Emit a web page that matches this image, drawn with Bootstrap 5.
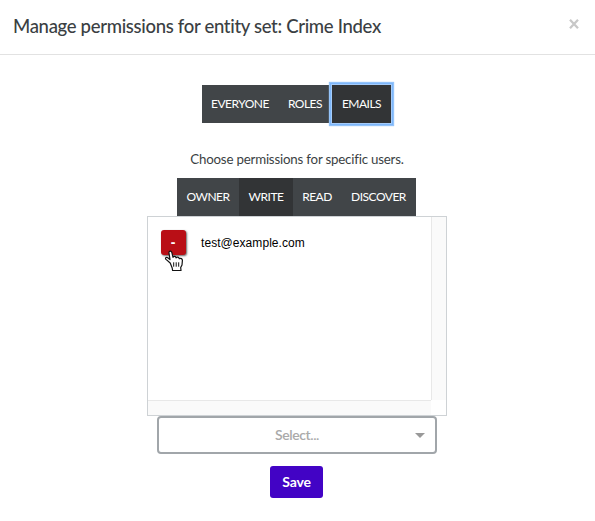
<!DOCTYPE html>
<html lang="en">
<head>
<meta charset="utf-8">
<meta name="viewport" content="width=device-width, initial-scale=1">
<title>Manage permissions</title>
<link href="https://cdn.jsdelivr.net/npm/bootstrap@5.3.0/dist/css/bootstrap.min.css" rel="stylesheet">
<style>
body{font-family:Lato,sans-serif;font-size:13.5px;color:#3b3f43;background:#fff;height:521px;overflow:hidden}
.dialog-head{height:55px;border-bottom:1px solid #e2e2e2;padding:0 15px 0 13px}
.dialog-title{font-size:18.5px;font-weight:500;letter-spacing:-.31px;line-height:24px;white-space:nowrap;margin-top:14px}
.close-x{color:#c8c8c8;line-height:0;margin-top:19px}
.dialog-body{width:594px}
.tabs{margin-right:1px}
.tabs .btn{--bs-btn-color:#fff;--bs-btn-bg:#414548;--bs-btn-border-width:0;--bs-btn-border-radius:0;--bs-btn-active-bg:#323436;--bs-btn-active-color:#fff;--bs-btn-hover-bg:#373a3c;--bs-btn-hover-color:#fff;
 flex:none;font-size:12px;letter-spacing:-.5px;line-height:18px;height:38px;padding:0;margin:0!important;white-space:nowrap}
.tabs-scope{margin-top:30px}
.tabs .btn.ringed{box-shadow:0 0 0 1px #a5ccfa,0 0 0 2px #7db6fa,0 0 1px 3px #95c4fa;z-index:2}
.hint{margin-top:26px;line-height:20px;font-size:13.3px;letter-spacing:-.2px;margin-bottom:9px}
.w-62{width:62px}.w-54{width:54px}.w-48{width:48px}.w-75px{width:75px}.w-76px{width:76px}.w-59{width:59px}
.user-box{width:300px;height:200px;border:1px solid #ced2d5;display:grid;grid-template:183px 15px/283px 15px}
.track-v{background:#fafafa;border-left:1px solid #e8e8e8}
.track-h{background:#fafafa;border-top:1px solid #e8e8e8}
.user-row{padding:13px 0 0 13px}
.btn-remove{--bs-btn-bg:#b90f16;--bs-btn-color:#fff;--bs-btn-hover-bg:#b90f16;--bs-btn-hover-color:#fff;--bs-btn-border-width:0;width:25px;height:25px;padding:0 1px 0 0;border-radius:3px;font:bold 14px/23px "Liberation Sans",sans-serif;box-shadow:1px 1px 2px rgba(0,0,0,.6)}
.pointer-hand{left:3px;top:20px}
.email{font:12px/16px "Liberation Sans",sans-serif;color:#000;margin:5px 0 0 15px;letter-spacing:.06px}
.picker{width:280px;height:38px;border:2px solid #a1a6aa;border-radius:4px;color:#aaa;font-weight:600;font-size:14px;letter-spacing:-.4px;padding-bottom:1px}
.picker-arrow{right:10px;top:15px;border:5px solid transparent;border-top-color:#999;border-bottom:0}
.btn-save{--bs-btn-bg:#4203c5;--bs-btn-color:#fff;--bs-btn-hover-bg:#3702a5;--bs-btn-hover-color:#fff;--bs-btn-border-width:0;width:53px;height:32px;padding:0 0 2px;font-size:14px;letter-spacing:-.2px;font-weight:700;border-radius:3px;margin:12px 1px 0 0}
</style>
</head>
<body>
<header class="dialog-head d-flex justify-content-between align-items-start">
  <h1 class="dialog-title mb-0">Manage permissions for entity set: Crime Index</h1>
  <a class="close-x" href="#" aria-label="Close"><svg width="12" height="10" viewBox="0 0 12 10"><path d="M2 .8 10 9.2M10 .8 2 9.2" stroke="currentColor" stroke-width="2.3"/></svg></a>
</header>
<main class="dialog-body d-flex flex-column align-items-center">
  <div class="btn-group tabs tabs-scope">
    <button class="btn w-76px">EVERYONE</button><button class="btn w-54">ROLES</button><button class="btn w-59 active ringed">EMAILS</button>
  </div>
  <p class="hint">Choose permissions for specific users.</p>
  <div class="btn-group tabs">
    <button class="btn w-62">OWNER</button><button class="btn w-54 active">WRITE</button><button class="btn w-48">READ</button><button class="btn w-75px">DISCOVER</button>
  </div>
  <section class="user-box">
    <div class="user-row d-flex align-items-start">
      <div class="position-relative">
        <button class="btn btn-remove d-block">-</button>
        <svg class="pointer-hand position-absolute" width="21" height="22" viewBox="0 0 21 22"><path d="M6.2 13 2 9.4C.7 8 2.3 6.7 3.8 7.7L6 9.6 5 3C4.7.9 7.2.5 7.8 2.4L9 7.3C9.7 5.8 11.8 6 12 7.8 13 6.5 15 7 15.3 8.7 16.8 7.8 18.5 8.8 18.4 10.5L18 15 16.7 17.6 17 20.5H8.6L8.2 18Z" fill="#fff" stroke="#111" stroke-width="1.2" stroke-linejoin="round"/><path d="M9.7 12.3v4.4M12.2 12.3v4.4M14.7 12.3v4.4" stroke="#111"/></svg>
      </div>
      <span class="email">test@example.com</span>
    </div>
    <div class="track-v"></div>
    <div class="track-h"></div>
  </section>
  <div class="picker position-relative d-flex align-items-center justify-content-center">Select...<span class="picker-arrow position-absolute"></span></div>
  <button class="btn btn-save">Save</button>
</main>
<script src="https://cdn.jsdelivr.net/npm/bootstrap@5.3.0/dist/js/bootstrap.bundle.min.js"></script>
</body>
</html>
